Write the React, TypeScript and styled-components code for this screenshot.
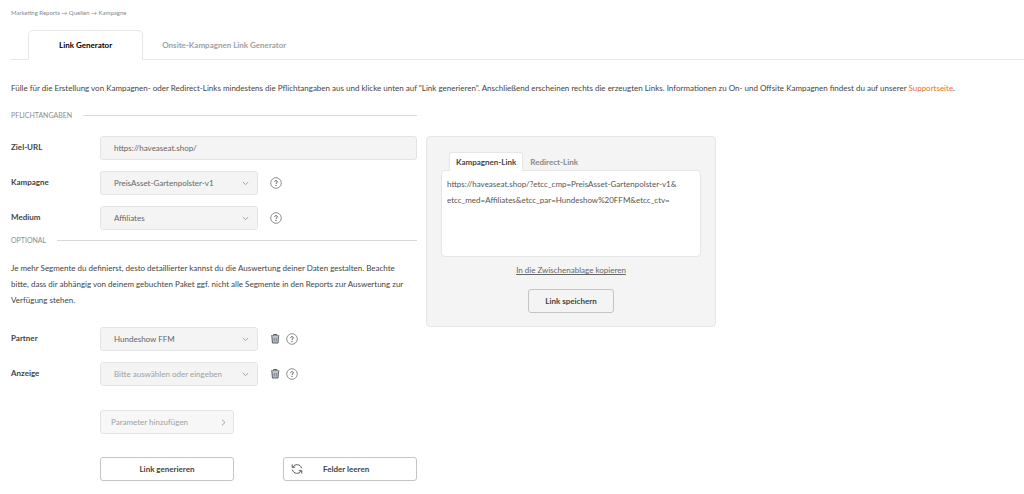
import React, { useState } from "react";
import styled, { createGlobalStyle } from "styled-components";

const GlobalStyle = createGlobalStyle`
  *, *::before, *::after { box-sizing: border-box; }
  body {
    margin: 0;
    background: #fff;
    color: #555;
    font-family: Lato, "Liberation Sans", Arial, sans-serif;
    font-size: 8px;
    line-height: 16px;
  }
  button, input, select, textarea { font: inherit; color: inherit; margin: 0; }
  button { cursor: pointer; }
`;

const Page = styled.div`
  padding: 5px 0 14px 11px;
`;

const Breadcrumb = styled.nav`
  font-size: 6px;
  color: #888;
`;

const MainTabs = styled.div`
  display: flex;
  margin-top: 9px;
  padding-left: 17px;
  border-bottom: 1px solid #e6e6e6;
`;

const MainTab = styled.button<{ $active?: boolean }>`
  height: 30px;
  padding: 0 ${(p) => (p.$active ? 30 : 18)}px;
  margin-bottom: -1px;
  border: 1px solid ${(p) => (p.$active ? "#e6e6e6" : "transparent")};
  border-bottom-color: ${(p) => (p.$active ? "#fff" : "transparent")};
  border-radius: 5px 5px 0 0;
  background: ${(p) => (p.$active ? "#fff" : "transparent")};
  color: ${(p) => (p.$active ? "#000" : "#a0a0a0")};
  font-weight: 700;
  white-space: nowrap;
`;

const Intro = styled.p`
  margin: 20px 0 0;
  color: #444;
`;

const SupportLink = styled.a`
  color: #ff6a13;
  text-decoration: none;
`;

const Columns = styled.div`
  display: grid;
  grid-template-columns: minmax(340px, 406fr) minmax(260px, 290fr) 299fr;
  column-gap: 9px;
  align-items: start;
  margin-top: 11px;
`;

const Form = styled.form`
  display: flex;
  flex-direction: column;
`;

const SectionTitle = styled.h2`
  display: flex;
  align-items: center;
  gap: 11px;
  margin: 0;
  font-size: 7px;
  font-weight: 400;
  line-height: 16px;
  color: #8c8c8c;
  &::after {
    content: "";
    flex: 1;
    height: 1px;
    background: #d9d9d9;
  }
`;

const Fields = styled.div`
  display: grid;
  row-gap: 11px;
  padding: 13px 0 2px;
`;

const Row = styled.div`
  display: grid;
  grid-template-columns: 89px 1fr;
  align-items: center;
`;

const Label = styled.label`
  padding-bottom: 2px;
  font-weight: 700;
  color: #444;
`;

const Controls = styled.div`
  display: flex;
  align-items: center;
`;

const TextInput = styled.input`
  width: 100%;
  height: 24px;
  padding: 0 13px;
  border: 1px solid #e4e4e4;
  border-radius: 3px;
  background: #f4f4f4;
  color: #666;
`;

const SelectBox = styled.div`
  display: grid;
  grid-template-columns: 1fr 16px;
  align-items: center;
  width: 158px;
  margin-right: 12px;
  & > * { grid-row: 1; }
  & > svg { grid-column: 2; pointer-events: none; }
`;

const Select = styled.select<{ $empty?: boolean }>`
  grid-column: 1 / 3;
  appearance: none;
  width: 100%;
  height: 24px;
  padding: 0 20px 0 13px;
  border: 1px solid #e4e4e4;
  border-radius: 3px;
  background: #f4f4f4;
  color: ${(p) => (p.$empty ? "#a0a0a0" : "#666")};
`;

const IconButton = styled.button`
  display: flex;
  padding: 0;
  margin-right: 5px;
  border: 0;
  background: none;
`;

const Hint = styled.p`
  margin: 12px 0 6px;
  padding-right: 6px;
  color: #444;
`;

const Actions = styled.div`
  display: grid;
  grid-template-columns: 134px 134px;
  justify-content: space-between;
  row-gap: 23px;
  margin: 22px 0 0 89px;
`;

const Button = styled.button`
  display: flex;
  align-items: center;
  justify-content: center;
  height: 24px;
  padding: 0 16px;
  border: 1px solid #c4c4c4;
  border-radius: 3px;
  background: #fff;
  color: #444;
  font-weight: 700;
  white-space: nowrap;
`;

const AddButton = styled(Button)`
  grid-column: 1;
  justify-content: space-between;
  padding: 0 6px 0 10px;
  border-color: #e4e4e4;
  background: #f7f7f7;
  color: #a0a0a0;
  font-weight: 400;
`;

const GenerateButton = styled(Button)`
  grid-column: 1;
`;

const ResetButton = styled(Button)`
  justify-content: flex-start;
  gap: 20px;
  padding: 0 7px;
`;

const Panel = styled.section`
  display: flex;
  flex-direction: column;
  align-items: center;
  margin-top: 29px;
  padding: 15px 14px 13px;
  border: 1px solid #e6e6e6;
  border-radius: 4px;
  background: #f4f4f4;
`;

const PanelTabs = styled.div`
  display: flex;
  align-self: stretch;
  padding-left: 8px;
`;

const PanelTab = styled.button<{ $active?: boolean }>`
  height: 19px;
  padding: 0 6px;
  margin-bottom: -1px;
  border: 1px solid ${(p) => (p.$active ? "#e6e6e6" : "transparent")};
  border-bottom: 0;
  border-radius: 3px 3px 0 0;
  background: ${(p) => (p.$active ? "#fff" : "transparent")};
  color: ${(p) => (p.$active ? "#444" : "#888")};
  font-weight: 700;
  z-index: 1;
`;

const Output = styled.textarea`
  width: 100%;
  height: 87px;
  padding: 5px;
  border: 1px solid #e6e6e6;
  border-radius: 4px;
  background: #fff;
  color: #555;
  resize: none;
`;

const CopyLink = styled.a`
  margin: 5px 0 11px;
  color: #666;
`;

const SaveButton = styled(Button)`
  background: #f4f4f4;
`;

const Chevron = ({ right }: { right?: boolean }) => (
  <svg width="7" height="7" viewBox="0 0 7 7" fill="none" stroke="#a3a3a3" aria-hidden="true">
    <path d={right ? "M2 0.7L5 3.5L2 6.3" : "M0.8 2L3.5 4.7L6.2 2"} />
  </svg>
);

const HelpIcon = () => (
  <svg width="12" height="12" viewBox="0 0 12 12" fill="none" aria-hidden="true">
    <circle cx="6" cy="6" r="5.3" stroke="#858585" strokeWidth="0.9" />
    <path d="M4.7 4.9C4.7 3.2 7.3 3.2 7.3 4.8C7.3 5.8 6 5.8 6 6.9" stroke="#555" strokeWidth="1" />
    <circle cx="6" cy="8.4" r="0.6" fill="#555" />
  </svg>
);

const TrashIcon = () => (
  <svg width="11" height="12" viewBox="0 0 11 12" fill="none" aria-hidden="true">
    <path d="M1 2.9H9.4M3.6 2.6V1.5H6.8V2.6" stroke="#5a5a5a" strokeWidth="1" />
    <path d="M1.9 3.4L2.4 10H8L8.5 3.4" fill="#c4ccd6" stroke="#5a5a5a" strokeWidth="1" />
    <path d="M4.2 4.8V8.6M6.2 4.8V8.6" stroke="#5f6b78" strokeWidth="0.8" />
  </svg>
);

const RefreshIcon = () => (
  <svg width="12" height="12" viewBox="0 0 12 12" fill="none" stroke="#5a5a5a" strokeWidth="1" aria-hidden="true">
    <path d="M1.8 4.1C3.8 0.6 9.4 0.8 10.6 5.2M1.2 1.4V4.3H4.2" />
    <path d="M10.2 7.9C8.2 11.4 2.6 11.2 1.4 6.8M10.8 10.6V7.7H7.8" />
  </svg>
);

interface SelectRowProps {
  id: string;
  label: string;
  value: string;
  empty?: boolean;
  removable?: boolean;
}

const SelectRow = ({ id, label, value, empty, removable }: SelectRowProps) => (
  <Row>
    <Label htmlFor={id}>{label}</Label>
    <Controls>
      <SelectBox>
        <Select id={id} $empty={empty}>
          <option>{value}</option>
        </Select>
        <Chevron />
      </SelectBox>
      {removable && (
        <IconButton type="button" aria-label={`${label} entfernen`}>
          <TrashIcon />
        </IconButton>
      )}
      <IconButton type="button" aria-label={`Hilfe zu ${label}`}>
        <HelpIcon />
      </IconButton>
    </Controls>
  </Row>
);

const CAMPAIGN_LINK =
  "https://haveaseat.shop/?etcc_cmp=PreisAsset-Gartenpolster-v1&\netcc_med=Affiliates&etcc_par=Hundeshow%20FFM&etcc_ctv=";

export default function App() {
  const [url, setUrl] = useState("https://haveaseat.shop/");
  return (
    <>
      <GlobalStyle />
      <Page>
        <Breadcrumb>Marketing Reports → Quellen → Kampagne</Breadcrumb>
        <MainTabs role="tablist">
          <MainTab role="tab" aria-selected="true" $active>Link Generator</MainTab>
          <MainTab role="tab" aria-selected="false">Onsite-Kampagnen Link Generator</MainTab>
        </MainTabs>
        <Intro>
          Fülle für die Erstellung von Kampagnen- oder Redirect-Links mindestens die Pflichtangaben aus und klicke
          unten auf "Link generieren". Anschließend erscheinen rechts die erzeugten Links. Informationen zu On- und
          Offsite Kampagnen findest du auf unserer <SupportLink href="#support">Supportseite</SupportLink>.
        </Intro>
        <Columns>
          <Form onSubmit={(e) => e.preventDefault()}>
            <SectionTitle>PFLICHTANGABEN</SectionTitle>
            <Fields>
              <Row>
                <Label htmlFor="url">Ziel-URL</Label>
                <TextInput id="url" value={url} onChange={(e) => setUrl(e.target.value)} />
              </Row>
              <SelectRow id="campaign" label="Kampagne" value="PreisAsset-Gartenpolster-v1" />
              <SelectRow id="medium" label="Medium" value="Affiliates" />
            </Fields>
            <SectionTitle>OPTIONAL</SectionTitle>
            <Hint>
              Je mehr Segmente du definierst, desto detaillierter kannst du die Auswertung deiner Daten gestalten.
              Beachte bitte, dass dir abhängig von deinem gebuchten Paket ggf. nicht alle Segmente in den Reports zur
              Auswertung zur Verfügung stehen.
            </Hint>
            <Fields>
              <SelectRow id="partner" label="Partner" value="Hundeshow FFM" removable />
              <SelectRow id="ad" label="Anzeige" value="Bitte auswählen oder eingeben" empty removable />
            </Fields>
            <Actions>
              <AddButton type="button">
                <span>Parameter hinzufügen</span>
                <Chevron right />
              </AddButton>
              <GenerateButton type="submit">Link generieren</GenerateButton>
              <ResetButton type="reset">
                <RefreshIcon />
                <span>Felder leeren</span>
              </ResetButton>
            </Actions>
          </Form>
          <Panel>
            <PanelTabs role="tablist">
              <PanelTab role="tab" aria-selected="true" $active>Kampagnen-Link</PanelTab>
              <PanelTab role="tab" aria-selected="false">Redirect-Link</PanelTab>
            </PanelTabs>
            <Output aria-label="Kampagnen-Link" readOnly value={CAMPAIGN_LINK} />
            <CopyLink href="#copy">In die Zwischenablage kopieren</CopyLink>
            <SaveButton type="button">Link speichern</SaveButton>
          </Panel>
        </Columns>
      </Page>
    </>
  );
}
